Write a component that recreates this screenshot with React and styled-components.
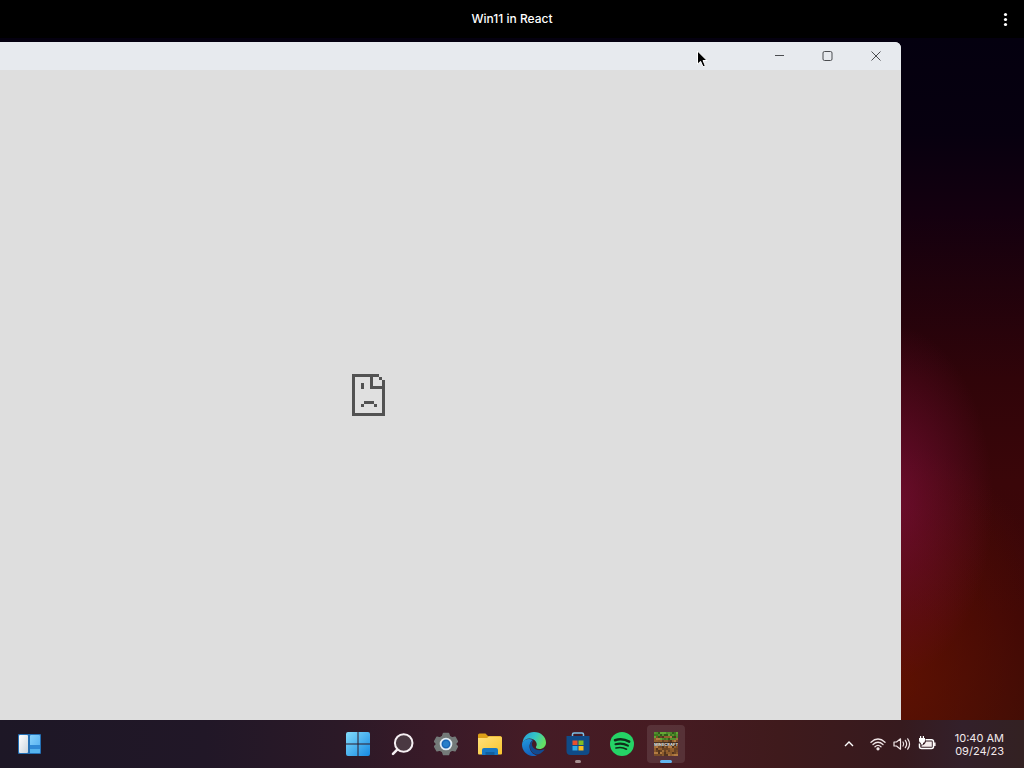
import React from 'react'
import styled, { createGlobalStyle } from 'styled-components'

const GlobalStyle = createGlobalStyle`
  * {
    box-sizing: border-box;
  }
  body {
    margin: 0;
    background-color: #000;
    font-family: Inter, "Liberation Sans", sans-serif;
  }
  button {
    border: 0;
    padding: 0;
    background: none;
    color: inherit;
    font: inherit;
    cursor: default;
  }
  svg {
    display: block;
  }
`

const Screen = styled.div`
  display: flex;
  flex-direction: column;
  height: 100vh;
  overflow: hidden;
`

const Header = styled.header`
  display: grid;
  grid-template-columns: 1fr auto 1fr;
  align-items: center;
  flex: none;
  height: 38px;
  padding: 0 10px;
  background-color: #000;
  color: #fff;
  h1 {
    grid-column: 2;
    margin: 0;
    font-size: 12px;
    font-weight: 500;
    line-height: 16px;
  }
`

const MenuButton = styled.button`
  justify-self: end;
  width: 18px;
  height: 24px;
`

const Desktop = styled.main`
  position: relative;
  flex: 1;
  background:
    radial-gradient(ellipse 10% 26% at 87% 68%, rgba(122, 14, 58, 0.75), transparent),
    radial-gradient(ellipse 16% 34% at 88% 94%, rgba(110, 20, 0, 0.65), transparent),
    linear-gradient(180deg, #04000f 0%, #07000f 14%, #14000f 26%, #20020c 36%, #300409 50%, #3a0609 65%, #3c0706 85%, #3c0c06 100%);
`

/* dragged past the left edge of the desktop */
const Window = styled.section`
  position: absolute;
  top: 4px;
  bottom: 0;
  left: -16%;
  right: 12%;
  display: flex;
  flex-direction: column;
  overflow: hidden;
  border-radius: 6px 6px 0 0;
  background-color: #dedede;
`

const TitleBar = styled.div`
  display: flex;
  justify-content: flex-end;
  flex: none;
  height: 28px;
  padding-right: 1px;
  background-color: #e7eaee;
  color: #4b4d50;
`

const WindowButton = styled.button`
  display: flex;
  align-items: center;
  justify-content: center;
  width: 48px;
  height: 28px;
`

const WindowBody = styled.div`
  display: flex;
  flex: 1;
  align-items: center;
  justify-content: center;
`

const Pointer = styled.svg`
  position: absolute;
  top: 12px;
  left: 68%;
`

const Taskbar = styled.footer`
  display: grid;
  grid-template-columns: 1fr auto 1fr;
  align-items: center;
  flex: none;
  height: 48px;
  background: linear-gradient(90deg, #1d1726 0%, #211727 20%, #2b1927 33%, #3a1a28 43%, #451c26 52%, #461b22 65%, #3f1a1c 76%, #361a1e 88%, #33202a 94%, #332122 100%);
  color: #fff;
`

const TaskButton = styled.button`
  position: relative;
  display: flex;
  align-items: center;
  justify-content: center;
  width: 38px;
  height: 38px;
  border-radius: 4px;
  background-color: ${props => props.$active ? 'rgba(255, 255, 255, 0.1)' : 'transparent'};
  &::after {
    content: "";
    display: ${props => props.$active || props.$open ? 'block' : 'none'};
    position: absolute;
    bottom: 0;
    width: ${props => props.$active ? '12px' : '6px'};
    height: 3px;
    border-radius: 2px;
    background-color: ${props => props.$active ? '#62b5ee' : '#a68f91'};
  }
`

const Widgets = styled.div`
  padding-left: 10px;
`

const Apps = styled.nav`
  display: flex;
  gap: 6px;
`

const Tray = styled.div`
  display: flex;
  align-items: center;
  justify-content: flex-end;
  padding-right: 20px;
`

const TrayButton = styled.button`
  display: flex;
  align-items: center;
  gap: ${props => props.$gap || 0}px;
  height: 38px;
  padding: 0 8px;
`

const Clock = styled.button`
  margin-left: 11px;
  padding-top: 2px;
  color: #f3eaec;
  font-size: 11px;
  line-height: 13px;
  text-align: right;
  span {
    display: block;
  }
`

function SadPage () {
  return (
    <svg width='33' height='42' viewBox='0 0 33 42' shapeRendering='crispEdges' role='img' aria-label='Page failed to load'>
      <path d='M0 0H27V3H30V6H33V42H0Z' fill='#e0e0e0' />
      <path
        fill='#525252'
        fillRule='evenodd'
        d='M0 0H27V3H21V12H30V6H33V42H0ZM3 3V39H30V15H18V3ZM27 3H30V6H27ZM9 9H12V15H9ZM12 27H22V30H12ZM9 30H12V33H9ZM22 30H25V33H22Z' />
    </svg>
  )
}

function WidgetIcon () {
  return (
    <svg width='24' height='24' viewBox='0 0 24 24'>
      <defs>
        <linearGradient id='wl' x2='1' y2='1'><stop stopColor='#fff' /><stop offset='1' stopColor='#cbd6df' /></linearGradient>
        <linearGradient id='wr' x2='1' y2='1'><stop stopColor='#85d0fb' /><stop offset='1' stopColor='#51adf0' /></linearGradient>
      </defs>
      <rect x='1' y='2' width='23' height='20' rx='1' fill='#2470b4' />
      <rect x='2' y='3' width='9' height='18' rx='1' fill='url(#wl)' />
      <rect x='13' y='3' width='10' height='18' rx='1' fill='url(#wr)' />
      <path d='M13 13H23V17H13Z' fill='#3089d5' />
      <path d='M13 17H23V20Q23 21 22 21H14Q13 21 13 20Z' fill='#55b3ee' />
    </svg>
  )
}

function StartIcon () {
  return (
    <svg width='24' height='24' viewBox='0 0 24 24'>
      <defs>
        <linearGradient id='st' gradientUnits='userSpaceOnUse' x1='0' y1='0' x2='24' y2='24'>
          <stop stopColor='#83dcfb' /><stop offset='1' stopColor='#1689e2' />
        </linearGradient>
      </defs>
      <path fill='url(#st)' d='M2 0H11.5V11.5H0V2Q0 0 2 0ZM12.5 0H22Q24 0 24 2V11.5H12.5ZM0 12.5H11.5V24H2Q0 24 0 22ZM12.5 12.5H24V22Q24 24 22 24H12.5Z' />
    </svg>
  )
}

function SearchIcon () {
  return (
    <svg width='24' height='24' viewBox='0 0 24 24' fill='none' stroke='#f6f0f3' strokeLinecap='round'>
      <circle cx='13.7' cy='11' r='8.8' fill='#4a3942' strokeWidth='2' />
      <path d='M7.2 17.6L3 21.8' strokeWidth='2.6' />
    </svg>
  )
}

function SettingsIcon () {
  return (
    <svg width='24' height='24' viewBox='0 0 24 24'>
      <path fill='#747a79' stroke='#747a79' strokeWidth='1.5' strokeLinejoin='round' d='M9.5 1.5H14.5L15.5 4.5L18 6L21 5.2L23.4 9.4L21.2 12L23.4 14.6L21 18.8L18 18L15.5 19.5L14.5 22.5H9.5L8.5 19.5L6 18L3 18.8L0.6 14.6L2.8 12L0.6 9.4L3 5.2L6 6L8.5 4.5Z' />
      <circle cx='12' cy='12' r='5.4' fill='#1765b5' stroke='#e3edf4' strokeWidth='1.8' />
      <circle cx='12' cy='12' r='3' fill='#287fc9' />
    </svg>
  )
}

function FolderIcon () {
  return (
    <svg width='26' height='24' viewBox='0 0 26 24'>
      <defs>
        <linearGradient id='fo' x2='1' y2='1'><stop stopColor='#ffe17c' /><stop offset='1' stopColor='#f9c52d' /></linearGradient>
      </defs>
      <path fill='#dda018' d='M1 3Q1 1.5 2.5 1.5H8.5L11 4H23Q24.5 4 24.5 6V10H1Z' />
      <path fill='url(#fo)' d='M1 6H10L12 4.5H24Q25 4.5 25 6V21.5Q25 22.5 24 22.5H2Q1 22.5 1 21.5Z' />
      <path fill='#1878c3' d='M5 23V18Q5 16 7 16H19Q21 16 21 18V23Z' />
      <path fill='#11609f' d='M8.5 20H17.5V23H8.5Z' />
    </svg>
  )
}

function EdgeIcon () {
  return (
    <svg width='24' height='24' viewBox='0 0 24 24'>
      <defs>
        <linearGradient id='eg' x2='1' y2='.4'><stop stopColor='#269bdd' /><stop offset='.55' stopColor='#34c5c5' /><stop offset='1' stopColor='#64df63' /></linearGradient>
        <linearGradient id='eb' y2='1' x2='.3'><stop stopColor='#2399de' /><stop offset='1' stopColor='#1262bd' /></linearGradient>
      </defs>
      <path fill='url(#eg)' d='M0.5 11C1 4.5 6 0 12 0C19 0 24 5 24 10.5C24 14.5 21 17 17.5 17C14.5 17 13.5 15.8 14 14.7C15.4 13 15 9.2 11.5 7.4C7 5.2 2.5 7 0.5 11Z' />
      <path fill='url(#eb)' d='M0.3 10.8C2.5 6.6 7.5 6 11 8C10 8.2 7.5 11 7.5 14.2C7.5 19 11 22.5 15 23.5C7 26 0 20 0 12.5Z' />
      <path fill='#124b91' d='M10.2 8.6C7 11 7 17 10.5 20.6C13.5 23.5 18 23 22.2 18.2C22.7 17.6 22.2 17.1 21.5 17.5C17 19.5 12 17.5 10.5 14.5C9.5 12.5 9.8 10 11.5 8.8Z' />
    </svg>
  )
}

function StoreIcon () {
  return (
    <svg width='24' height='24' viewBox='0 0 24 24'>
      <path d='M6.5 5V2.2Q6.5 1 8 1H16Q17.5 1 17.5 2.2V5' fill='none' stroke='#7cc0e6' strokeWidth='1.5' />
      <path fill='#104b87' d='M0.5 4H23.5V19Q23.5 23 19.5 23H4.5Q0.5 23 0.5 19Z' />
      <path fill='#e9502c' d='M6.5 8.5H11.5V13H6.5Z' />
      <path fill='#80bd24' d='M12.5 8.5H17.5V13H12.5Z' />
      <path fill='#2fa9e5' d='M6.5 14H11.5V18.5H6.5Z' />
      <path fill='#f9bd20' d='M12.5 14H17.5V18.5H12.5Z' />
    </svg>
  )
}

function SpotifyIcon () {
  return (
    <svg width='24' height='24' viewBox='0 0 24 24' fill='none' stroke='#102d1b' strokeLinecap='round'>
      <circle cx='12' cy='12' r='12' fill='#25d366' stroke='none' />
      <path d='M5 8.2C9.5 6.9 15 7.3 19.2 9.7' strokeWidth='2.5' />
      <path d='M5.5 12.3C9.6 11.1 14.2 11.6 17.9 13.7' strokeWidth='2.1' />
      <path d='M6 16C9.6 15.1 13.3 15.4 16.5 17.2' strokeWidth='1.7' />
    </svg>
  )
}

const GRASS = ['#57902e', '#3c7a20', '#62a834', '#315c1a', '#4c8a2b']
const DIRT = ['#8a5a2c', '#6b4424', '#a2703a', '#54351f', '#b47c42', '#7a4d28', '#94602e']

function MinecraftIcon () {
  const cells = []
  for (let y = 0; y < 12; y++) {
    for (let x = 0; x < 12; x++) {
      const noise = Math.floor(Math.abs(Math.sin(x * 12.9898 + y * 78.233) * 43758))
      const grass = y < 2 || (y < 4 && noise % 3 === 0)
      const colors = grass ? GRASS : DIRT
      cells.push(<rect key={x + '-' + y} x={x * 2} y={y * 2} width='2' height='2' fill={colors[noise % colors.length]} />)
    }
  }
  return (
    <svg width='24' height='24' viewBox='0 0 24 24' shapeRendering='crispEdges'>
      {cells}
      <path d='M0 10H24V14H0Z' fill='#2c211d' fillOpacity='0.75' />
      <text x='12' y='14' textAnchor='middle' fontFamily='Inter, sans-serif' fontSize='4' fontWeight='800' fill='#ded9d5'>MINECRAFT</text>
    </svg>
  )
}

function WifiIcon () {
  return (
    <svg width='16' height='14' viewBox='0 0 16 14' fill='none' stroke='#f0e6e7' strokeWidth='1.3' strokeLinecap='round'>
      <path d='M1 5.2Q8-1.2 15 5.2' />
      <path d='M3 7.5Q8 3 13 7.5' />
      <path d='M5 9.7Q8 7 11 9.7' />
      <circle cx='8' cy='11.8' r='1' fill='#f0e6e7' />
    </svg>
  )
}

function SoundIcon () {
  return (
    <svg width='18' height='14' viewBox='0 0 18 14' fill='none' stroke='#f0e6e7' strokeWidth='1.2' strokeLinecap='round' strokeLinejoin='round'>
      <path d='M1 5H3.5L7.5 1.8V12.2L3.5 9H1Z' />
      <path d='M10 5Q11.5 7 10 9' />
      <path d='M12.3 3.3Q15 7 12.3 10.7' />
      <path d='M14.7 1.8Q18.4 7 14.7 12.2' />
    </svg>
  )
}

function BatteryIcon () {
  return (
    <svg width='18' height='16' viewBox='0 0 18 16'>
      <path d='M7.5 3.7H13.5Q15.5 3.7 15.5 5.7V10.5Q15.5 12.5 13.5 12.5H3.5Q1.5 12.5 1.5 10.5V7.5' fill='none' stroke='#fff' strokeWidth='1.5' />
      <path d='M16 6.5H17.6V10H16ZM8 5.6H13.8V10.8H3.5V9.6Q7 9 8 5.6Z' fill='#f6eeee' />
      <path d='M1 2H2V0H3.2V2H4.8V0H6V2H7V4.5Q7 6.5 5 7V8.5H3V7Q1 6.5 1 4.5Z' fill='#fff' />
    </svg>
  )
}

const apps = [
  { name: 'Start', Icon: StartIcon },
  { name: 'Search', Icon: SearchIcon },
  { name: 'Settings', Icon: SettingsIcon },
  { name: 'File Explorer', Icon: FolderIcon },
  { name: 'Microsoft Edge', Icon: EdgeIcon },
  { name: 'Microsoft Store', Icon: StoreIcon, open: true },
  { name: 'Spotify', Icon: SpotifyIcon },
  { name: 'Minecraft', Icon: MinecraftIcon, active: true }
]

function App () {
  return (
    <Screen>
      <GlobalStyle />
      <Header>
        <h1>Win11 in React</h1>
        <MenuButton aria-label='Menu'>
          <svg width='18' height='24' viewBox='0 0 18 24' fill='#fff'>
            <circle cx='9.5' cy='7.5' r='1.6' />
            <circle cx='9.5' cy='12.5' r='1.6' />
            <circle cx='9.5' cy='17.5' r='1.6' />
          </svg>
        </MenuButton>
      </Header>
      <Desktop>
        <Window>
          <TitleBar>
            <WindowButton aria-label='Minimize'>
              <svg width='12' height='12' fill='none' stroke='currentColor'><path d='M1 5.5H10' /></svg>
            </WindowButton>
            <WindowButton aria-label='Maximize'>
              <svg width='12' height='12' fill='none' stroke='currentColor'><rect x='1' y='1.5' width='9' height='9' rx='1.5' /></svg>
            </WindowButton>
            <WindowButton aria-label='Close'>
              <svg width='12' height='12' fill='none' stroke='currentColor'><path d='M1.5 1.5L10.5 10.5M10.5 1.5L1.5 10.5' /></svg>
            </WindowButton>
          </TitleBar>
          <WindowBody>
            <SadPage />
          </WindowBody>
        </Window>
        <Pointer width='14' height='19' viewBox='0 0 14 19'>
          <path d='M1.5 1V14.2L4.6 11.3L7 16.8L9.3 15.8L7 10.5H11Z' fill='#000' stroke='#fff' strokeWidth='1' />
        </Pointer>
      </Desktop>
      <Taskbar>
        <Widgets>
          <TaskButton aria-label='Widgets'><WidgetIcon /></TaskButton>
        </Widgets>
        <Apps>
          {apps.map(({ name, Icon, open, active }) => (
            <TaskButton key={name} aria-label={name} $open={open} $active={active}>
              <Icon />
            </TaskButton>
          ))}
        </Apps>
        <Tray>
          <TrayButton aria-label='Show hidden icons'>
            <svg width='10' height='8' fill='none' stroke='#fff' strokeWidth='1.4'><path d='M1 6L5 2L9 6' /></svg>
          </TrayButton>
          <TrayButton $gap={7} aria-label='Network, sound and battery'>
            <WifiIcon />
            <SoundIcon />
            <BatteryIcon />
          </TrayButton>
          <Clock>
            <span>10:40 AM</span>
            <span>09/24/23</span>
          </Clock>
        </Tray>
      </Taskbar>
    </Screen>
  )
}

export default App
